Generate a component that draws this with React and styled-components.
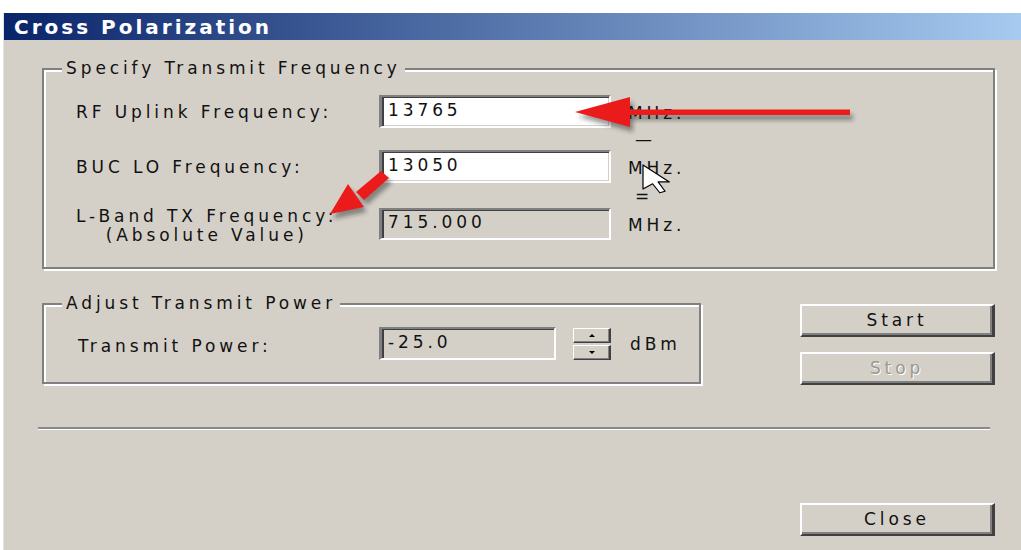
import React from "react";
import styled, { createGlobalStyle } from "styled-components";

const GlobalStyle = createGlobalStyle`
  html, body {
    margin: 0;
    padding: 0;
    background: #ffffff;
  }
  body {
    font-family: "DejaVu Sans", "Liberation Sans", sans-serif;
    font-size: 17px;
    letter-spacing: 3.9px;
    color: #111;
  }
`;

const Page = styled.div`
  position: relative;
  width: 1021px;
  height: 550px;
  overflow: hidden;
`;

const Window = styled.div`
  margin: 13px 0 0 3px;
  height: 537px;
  background: #d4d0c8;
  border-left: 1px solid #e6e3dc;
`;

const TitleBar = styled.div`
  height: 27px;
  display: flex;
  align-items: center;
  padding-left: 10px;
  background: linear-gradient(90deg, #0a246a 0%, #a6caf0 100%);
  color: #fff;
  font-weight: bold;
  font-size: 20px;
  letter-spacing: 3px;
`;

const Body = styled.div`
  padding: 28px 0 0 38px;
`;

const Group = styled.div`
  position: relative;
  box-sizing: border-box;
  width: ${(p) => p.$width}px;
  height: ${(p) => p.$height}px;
  border: 2px solid #808080;
  box-shadow: inset 2px 2px 0 #fff, 2px 2px 0 #fff;
`;

const Caption = styled.span`
  position: absolute;
  top: -12px;
  left: 18px;
  padding: 0 4px;
  line-height: 20px;
  background: #d4d0c8;
`;

const FreqGrid = styled.div`
  display: grid;
  grid-template-columns: 286px 232px auto;
  grid-template-rows: 33px 22px 33px 25px 32px;
  column-gap: 17px;
  align-items: center;
  padding: 25px 0 0 32px;
`;

const Label = styled.span`
  display: inline-block;
  justify-self: start;
  text-align: center;
  line-height: 19px;
  padding-top: ${(p) => (p.$two ? 4 : 2)}px;
`;

const Unit = styled.span`
  line-height: 20px;
  padding-top: 2px;
`;

const Operator = styled.span`
  padding-left: 7px;
  line-height: 20px;
`;

const Field = styled.input`
  box-sizing: border-box;
  width: ${(p) => p.$width || 232}px;
  height: ${(p) => p.$height || 33}px;
  margin: 0;
  padding: 0 0 4px 6px;
  font: inherit;
  letter-spacing: inherit;
  color: #111;
  background: ${(p) => (p.$disabled ? "#d4d0c8" : "#fff")};
  border-style: solid;
  border-width: 2px 2px 2px 3px;
  border-color: #808080 #fff #fff #808080;
  box-shadow: inset 2px 1px 0 #404040, inset -1px -1px 0 #d4d0c8;
  outline: none;
`;

const Lower = styled.div`
  display: flex;
  justify-content: space-between;
  align-items: flex-start;
  width: 953px;
  margin-top: 34px;
`;

const PowerRow = styled.div`
  display: flex;
  align-items: center;
  padding: 22px 0 0 34px;
`;

const PowerLabel = styled.span`
  width: 301px;
  padding-top: 4px;
`;

const Spinner = styled.div`
  display: flex;
  flex-direction: column;
  gap: 2px;
  margin-left: 17px;
`;

const SpinButton = styled.div`
  box-sizing: border-box;
  width: 38px;
  height: 15px;
  display: flex;
  align-items: center;
  justify-content: center;
  border-style: solid;
  border-width: 1px 2px 1px 1px;
  border-color: #fff #404040 #404040 #fff;
  box-shadow: inset -1px -1px 0 #808080;
  background: #d4d0c8;
`;

const Tri = styled.span`
  width: 0;
  height: 0;
  border-left: 3px solid transparent;
  border-right: 3px solid transparent;
  ${(p) => (p.$down ? "border-top: 3px solid #000;" : "border-bottom: 3px solid #000;")}
`;

const DbUnit = styled.span`
  margin-left: 19px;
`;

const ButtonColumn = styled.div`
  display: flex;
  flex-direction: column;
  gap: 15px;
  margin-top: 1px;
`;

const Button = styled.button`
  box-sizing: border-box;
  width: 195px;
  height: 33px;
  margin: 0;
  padding: 0 0 2px;
  font: inherit;
  letter-spacing: inherit;
  background: #d4d0c8;
  color: ${(p) => (p.disabled ? "#9a9890" : "#111")};
  text-shadow: ${(p) => (p.disabled ? "1px 1px 0 #fff" : "none")};
  border-style: solid;
  border-width: 2px 3px 2px 2px;
  border-color: #fff #404040 #404040 #fff;
  box-shadow: inset -2px -2px 0 #808080;
`;

const Separator = styled.div`
  width: 952px;
  margin: 42px 0 0 -4px;
  border-top: 2px solid #8a8a8a;
  border-bottom: 1px solid #fff;
`;

const Footer = styled.div`
  display: flex;
  justify-content: flex-end;
  width: 953px;
  margin-top: 73px;
`;

const Overlay = styled.svg`
  position: absolute;
  left: 0;
  top: 0;
  width: 1021px;
  height: 550px;
  pointer-events: none;
`;

// red call-out arrows and the mouse pointer, drawn over the dialog
function Annotations() {
  const shaft1 = "M628 109.5 L850 109.5 L850 115 L628 115 Z";
  const head1 = "M575 112 L630 97 L630 127 Z";
  const shaft2 = "M381 171 L389 178 L364 200 L356 192 Z";
  const head2 = "M330 214 L348 184 L364 207 Z";
  return (
    <Overlay viewBox="0 0 1021 550">
      <defs>
        <filter id="soft" x="-20%" y="-50%" width="140%" height="200%">
          <feGaussianBlur stdDeviation="2.2" />
        </filter>
      </defs>
      <g transform="translate(3 5)" fill="rgba(40,40,40,0.45)" filter="url(#soft)">
        <path d={shaft1} />
        <path d={head1} />
        <path d={shaft2} />
        <path d={head2} />
      </g>
      <g fill="#ec1b1b">
        <path d={shaft1} />
        <path d={head1} />
        <path d={shaft2} />
        <path d={head2} />
      </g>
      <path
        transform="translate(643 165) scale(2.4 1.5)"
        d="M0 0 L0 16 L4 12.5 L7 18.5 L9.2 17.5 L6.3 11.3 L11 11.3 Z"
        fill="#fff"
        stroke="#000"
        strokeWidth="1.2"
        vectorEffect="non-scaling-stroke"
        strokeLinejoin="round"
      />
    </Overlay>
  );
}

export default function App() {
  return (
    <>
      <GlobalStyle />
      <Page>
        <Window>
          <TitleBar>Cross Polarization</TitleBar>
          <Body>
            <Group $width={953} $height={201}>
              <Caption>Specify Transmit Frequency</Caption>
              <FreqGrid>
                <Label>RF Uplink Frequency:</Label>
                <Field readOnly defaultValue="13765" />
                <Unit>MHz.</Unit>

                <span />
                <span />
                <Operator>—</Operator>

                <Label>BUC LO Frequency:</Label>
                <Field readOnly defaultValue="13050" />
                <Unit>MHz.</Unit>

                <span />
                <span />
                <Operator>=</Operator>

                <Label $two>
                  L-Band TX Frequency:
                  <br />
                  (Absolute Value)
                </Label>
                <Field readOnly $disabled $height={32} defaultValue="715.000" />
                <Unit>MHz.</Unit>
              </FreqGrid>
            </Group>

            <Lower>
              <Group $width={659} $height={81}>
                <Caption>Adjust Transmit Power</Caption>
                <PowerRow>
                  <PowerLabel>Transmit Power:</PowerLabel>
                  <Field readOnly $disabled $width={177} defaultValue="-25.0" />
                  <Spinner>
                    <SpinButton>
                      <Tri />
                    </SpinButton>
                    <SpinButton>
                      <Tri $down />
                    </SpinButton>
                  </Spinner>
                  <DbUnit>dBm</DbUnit>
                </PowerRow>
              </Group>
              <ButtonColumn>
                <Button>Start</Button>
                <Button disabled>Stop</Button>
              </ButtonColumn>
            </Lower>

            <Separator />

            <Footer>
              <Button>Close</Button>
            </Footer>
          </Body>
        </Window>
        <Annotations />
      </Page>
    </>
  );
}
